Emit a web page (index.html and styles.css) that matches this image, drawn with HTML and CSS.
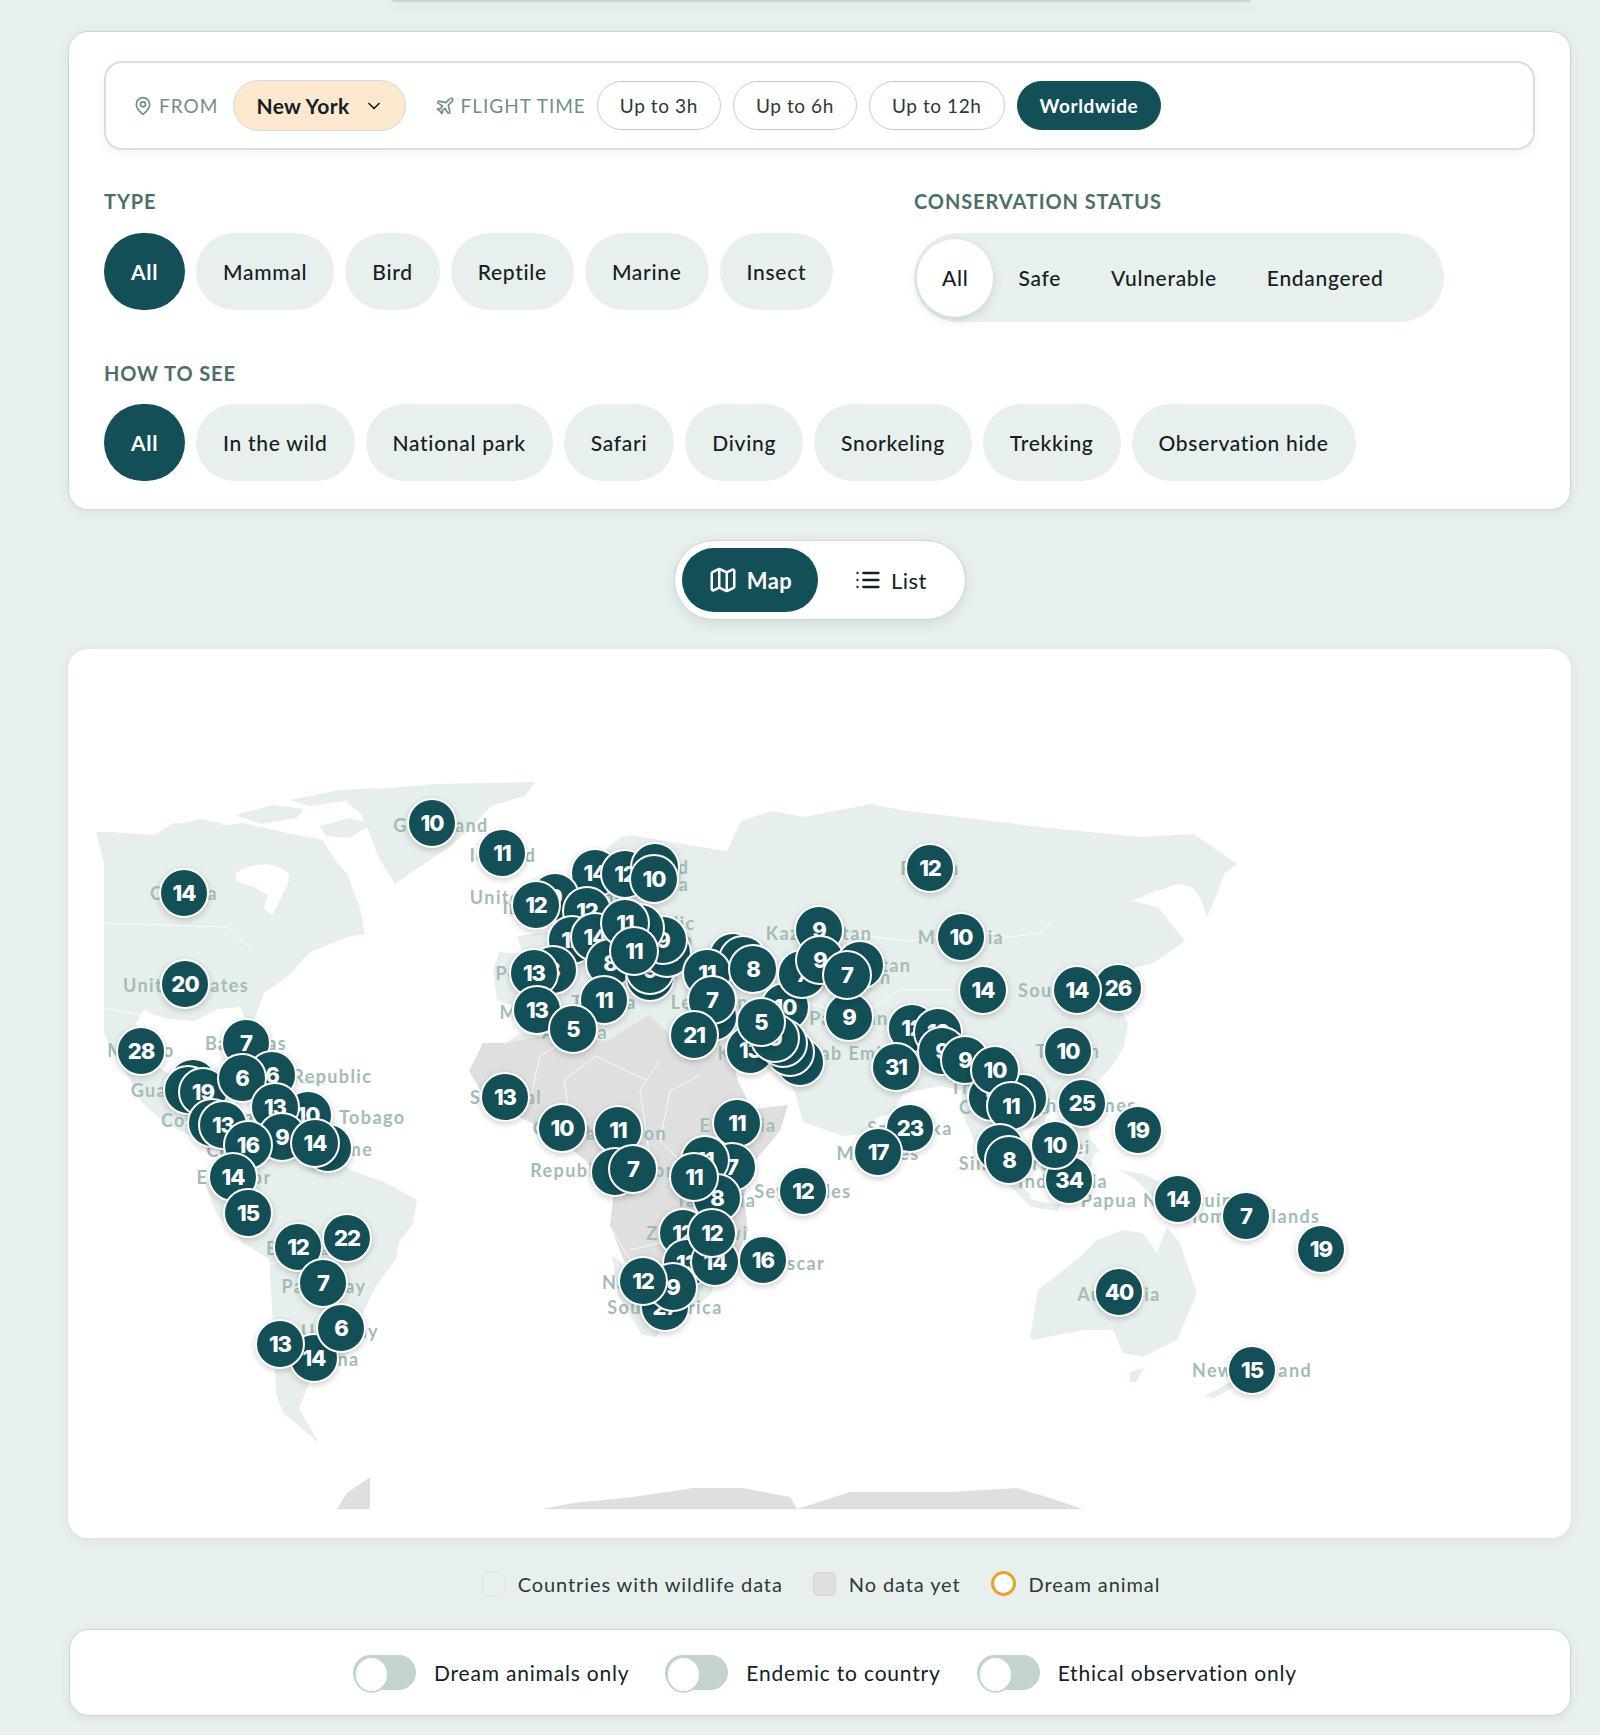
FILE: index.html
```html
<!DOCTYPE html>
<html lang="en">
  <head>
    <meta charset="UTF-8" />
    <meta name="viewport" content="width=device-width, initial-scale=1.0" />
    <title>Wildlife Map</title>
    <link rel="stylesheet" href="styles.css">
  </head>
  <body>
    <div class="top-strip"></div>

    <section class="card filters">
      <div class="trip-bar">
        <span class="trip-label">
          <svg class="icon" width="20" height="22" viewBox="0 0 24 24"><path d="M20 10c0 6-8 12-8 12s-8-6-8-12a8 8 0 0 1 16 0Z"/><circle cx="12" cy="10" r="3"/></svg>
          FROM
        </span>
        <button class="city-btn">
          New York
          <svg class="icon" width="20" height="20" viewBox="0 0 24 24"><path d="m6 9 6 6 6-6"/></svg>
        </button>
        <span class="trip-label flight-label">
          <svg class="icon" width="20" height="20" viewBox="0 0 24 24"><path d="M17.8 19.2 16 11l3.5-3.5C21 6 21.5 4 21 3c-1-.5-3 0-4.5 1.5L13 8 4.8 6.2c-.5-.1-.9.1-1.1.5l-.3.5c-.2.5-.1 1 .3 1.3L9 12l-2 3H4l-1 1 3 2 2 3 1-1v-3l3-2 3.5 5.3c.3.4.8.5 1.3.3l.5-.2c.4-.3.6-.7.5-1.2z"/></svg>
          FLIGHT TIME
        </span>
        <button class="time-btn">Up to 3h</button>
        <button class="time-btn">Up to 6h</button>
        <button class="time-btn">Up to 12h</button>
        <button class="time-btn active">Worldwide</button>
      </div>

      <div class="filter-columns">
        <div class="type-col">
          <h3 class="group-label">TYPE</h3>
          <div class="chips">
            <button class="chip active">All</button>
            <button class="chip">Mammal</button>
            <button class="chip">Bird</button>
            <button class="chip">Reptile</button>
            <button class="chip">Marine</button>
            <button class="chip">Insect</button>
          </div>
        </div>
        <div>
          <h3 class="group-label">CONSERVATION STATUS</h3>
          <div class="segments">
            <button class="segment selected">All</button>
            <button class="segment">Safe</button>
            <button class="segment">Vulnerable</button>
            <button class="segment">Endangered</button>
          </div>
        </div>
      </div>

      <h3 class="group-label see-label">HOW TO SEE</h3>
      <div class="chips">
        <button class="chip active">All</button>
        <button class="chip">In the wild</button>
        <button class="chip">National park</button>
        <button class="chip">Safari</button>
        <button class="chip">Diving</button>
        <button class="chip">Snorkeling</button>
        <button class="chip">Trekking</button>
        <button class="chip">Observation hide</button>
      </div>
    </section>

    <div class="view-row">
      <div class="view-toggle">
        <button class="view-btn active">
          <svg class="icon" width="30" height="30" viewBox="0 0 24 24"><path d="M14.106 5.553a2 2 0 0 0 1.788 0l3.659-1.83A1 1 0 0 1 21 4.619v12.764a1 1 0 0 1-.553.894l-4.553 2.277a2 2 0 0 1-1.788 0l-4.212-2.106a2 2 0 0 0-1.788 0l-3.659 1.83A1 1 0 0 1 3 19.381V6.618a1 1 0 0 1 .553-.894l4.553-2.277a2 2 0 0 1 1.788 0z"/><path d="M15 5.764v15"/><path d="M9 3.236v15"/></svg>
          Map
        </button>
        <button class="view-btn">
          <svg class="icon" width="28" height="28" viewBox="0 0 24 24"><path d="M8 6h13M8 12h13M8 18h13M3 6h.01M3 12h.01M3 18h.01"/></svg>
          List
        </button>
      </div>
    </div>

    <section class="map-card" id="map">
      <svg class="world" viewBox="68 649 1503 889">
        <g class="land">
          <!-- arctic islands + greenland -->
          <path d="M172 825l30-6 22 5-14 7-30 2zM235 815l38-10 30 4-6 9-36 6zM290 800l50-10 40-2-30 12-40 6zM320 826l30-8 22 6-22 14-24-2zM345 792l90-8 100-2-10 14-34 10-16 18-24 22-30 20-26 18-16-26-10-26-8-18-14-12z"/>
          <!-- north america -->
          <path d="M96 832h14l45 3 18-12 37 4 33-4 44 10 36 7 12 20 12 14 13 34 5 26-14 2-41 16-22 24-24 17-8 22-6 14-10-22-22 2-24 12-24-2-16-4-10-6-8 14 2 20 6 14 10 8 14 8 22 2 10-10 6 2-4 16-14 10-8 6 20 24 18 10 16 8 6 14-16-2-28-14-30-16-24-20-12-24-16-24-10-22v-170z"/>
          <path d="M236 873c12-8 36-14 52 0 4 10-6 20-10 32l-6 10-8-6 4-14-14-8-18-6z" class="water"/>
          <path d="M247 1050l26 4 22 10-18 4-30-8zM300 1078l20 2 8 5-24-1z"/>
          <!-- south america -->
          <path d="M247 1137l24-14 30 6 49 41 34 12 33 18-4 24-14 18-3 17-20 27-13 27-14 40-40 30-10 26 20 34-36-30-7-20-3-67-4-67-26-16-27-30-10-27 10-27z"/>
          <!-- iceland uk -->
          <path d="M480 848l22-8 18 6-12 12-22 2zM530 880l14 8 4 20 8 12-18 8-12-4 6-16-6-14zM508 900l14-4 2 14-14 6z"/>
          <!-- eurasia -->
          <path d="M497 1000l-4-30 6-18 24 2-6-18 30-4 30-8 18-14-8-24 18-36 16-13 10-2 70 12 26 4 14-30 30-10 33 6 67-13 36 7 53 6 80 10 100 10 54-3 43 30-13 10-6 18-11 25-6-18-9-12-14-3-24 8-22 9 26 6 27 34-33 23-34 7-6 12 10 28 6 12-4 24-14 22-17 17-13 17 2 20 10 25-14-2-6-16-4-24-9-5-18-3 6 18-4 8-30 8-22 24-14-10-12-26-4-30-22-4-36 8-10 18-16 6-14 16-20 2-40-14-8-30-10-14 2-28-28-8-34 10-28-10-22 2-6-12-30-2-26 20-10-14z"/>
          <path d="M985 1150l20 14 26 32-6 4-24-22zM1040 1140l16 8 10 20-20 10-12-18zM1076 1112l10 2 4 24 10 14-10 2-14-20zM1017 1193l20 8 24 4-4 6-26-4zM1100 986l14-16 10-14 8-2-2 20-14 14-18 4zM1084 1150l10 4-6 30-8-2zM1120 1170l24 4 28 14 26 14-12 4-32-8-18-18z"/>
          <!-- africa data countries -->
          <path d="M497 1072l10-30 12-8 90 6 40-26 20 20-190 40zM612 1255l30 26 50 12-36 44-14-2-24-40zM690 1290l26-18-4 20-12 12z"/>
          <!-- australia + nz -->
          <path d="M1030 1337l8-47 42-33 17-17 26-10 20 3 14 20 10-26 13 16 17 50-20 47-34 17-20-4-10-23-30 0-50 10zM1130 1372l14-4-8 14-6 0zM1204 1396l26-14 6 4-22 12zM1244 1345l10 2-2 12-8 0z"/>
        </g>
        <g class="grey">
          <!-- africa -->
          <path d="M507 1043l40-8 60 6 42-26 26 24 56 12 7 30 14 28 36-4-8 26-30 36-6 30 4 34-12 26-36 8-12-10-20 22-40-6-18-46 4-34-30-32-36-28-33-16-32-20-14-24 14-28z"/>
          <!-- antarctica -->
          <path d="M543 1509l30-6 60-6 60-9 50 0 47 9 7 12zM797 1509l53-17 100 0 67-4 30 9 36 12z M337 1509l10-16 23-16v32z"/>
        </g>
        <g class="borders">
          <path d="M96 923l131 4 23 20M96 1007l60 10 20 4M250 1270l40-12 32 20M300 1350l20-30"/>
          <path d="M530 1100l10-44 30-18M570 1120l-6-40 32-24 50 24M650 1160l-10-70 20-30M700 1075l-30 16-10 50 30 30 10-30M560 1210l40 0 30 50M670 1240l-40 10"/>
          <path d="M760 965l60-20 40-10 50 6 40-6 20-6 40 8 30-4 14-14M830 1040l40-30 30-20 60 0 30-30M770 990l30 10 30 10"/>
        </g>
      </svg>
      <div id="labels"></div>
      <div id="markers"></div>
    </section>

    <div class="legend">
      <span class="legend-item"><i class="swatch swatch-data"></i>Countries with wildlife data</span>
      <span class="legend-item"><i class="swatch swatch-none"></i>No data yet</span>
      <span class="legend-item"><i class="swatch swatch-dream"></i>Dream animal</span>
    </div>

    <section class="card switches">
      <label class="switch-item"><span class="switch"></span>Dream animals only</label>
      <label class="switch-item"><span class="switch"></span>Endemic to country</label>
      <label class="switch-item"><span class="switch"></span>Ethical observation only</label>
    </section>

    <script src="map.js"></script>
  </body>
</html>
```
FILE: styles.css
```css
* {
  box-sizing: border-box;
}
html,
body {
  height: 1735px;
  overflow: hidden;
}
body {
  margin: 0;
  padding: 0 29px 0 68px;
  background-color: #e8f0ed;
  font-family: Lato, "Noto Sans", sans-serif;
  color: #14211f;
}
button {
  font-family: inherit;
  border: none;
  cursor: pointer;
}
.icon {
  fill: none;
  stroke: currentColor;
  stroke-width: 2;
  stroke-linecap: round;
  stroke-linejoin: round;
  flex: none;
}
.top-strip {
  height: 2px;
  margin: 0 321px 29px 324px;
  background: #c6d6d2;
  box-shadow: 0 2px 14px rgba(60, 100, 90, 0.22);
}
.card {
  background: white;
  border: 1px solid #c9dad6;
  border-radius: 20px;
  box-shadow: 0 2px 10px rgba(60, 100, 90, 0.1);
}
.filters {
  height: 479px;
  padding: 29px 35px;
}
.trip-bar {
  display: flex;
  align-items: center;
  height: 89px;
  padding: 0 0 0 27px;
  border: 2px solid #d2e1dd;
  border-radius: 18px;
  box-shadow: 0 3px 10px rgba(60, 100, 90, 0.08);
}
.trip-label {
  display: flex;
  align-items: center;
  gap: 6px;
  font-size: 19px;
  letter-spacing: 1px;
  color: #6f8f8a;
}
.flight-label {
  margin: 0 11px 0 29px;
}
.city-btn {
  display: flex;
  align-items: center;
  gap: 14px;
  height: 51px;
  margin-left: 15px;
  padding: 0 21px 0 22px;
  font-size: 21px;
  font-weight: 700;
  letter-spacing: 0.4px;
  color: #14211f;
  background: #fbe8cf;
  border: 1px solid #d5dccf;
  border-radius: 26px;
}
.time-btn {
  height: 49px;
  margin-right: 12px;
  padding: 0 22px;
  font-size: 19px;
  letter-spacing: 0.6px;
  color: #2a3a38;
  background: white;
  border: 1px solid #bcd0cb;
  border-radius: 25px;
}
.time-btn.active {
  color: white;
  font-weight: 700;
  background: #134f56;
  border-color: #134f56;
}
.filter-columns {
  display: flex;
}
.type-col {
  width: 810px;
}
.group-label {
  margin: 40px 0 21px;
  font-size: 20px;
  line-height: 22px;
  font-weight: 700;
  letter-spacing: 0.9px;
  color: #4c7069;
}
.see-label {
  margin-bottom: 20px;
}
.chips {
  display: flex;
  gap: 11px;
}
.chip {
  height: 77px;
  padding: 0 27px;
  font-size: 21px;
  font-weight: 500;
  letter-spacing: 0.7px;
  color: #14211f;
  background: #e8f0ed;
  border-radius: 39px;
}
.chip.active {
  color: white;
  font-weight: 700;
  background: #134f56;
}
.segments {
  display: flex;
  align-items: center;
  width: 530px;
  height: 89px;
  padding: 0 3px;
  background: #e8f0ed;
  border-radius: 45px;
}
.segment {
  height: 78px;
  padding: 0 25px;
  font-size: 21px;
  font-weight: 500;
  letter-spacing: 0.7px;
  color: #14211f;
  background: transparent;
  border-radius: 39px;
}
.segment.selected {
  background: white;
  box-shadow: 0 3px 10px rgba(60, 100, 90, 0.2);
}
.view-row {
  display: flex;
  justify-content: center;
  padding: 30px 0 29px;
}
.view-toggle {
  display: flex;
  align-items: center;
  gap: 5px;
  width: 292px;
  height: 80px;
  padding: 0 7px;
  background: white;
  border: 1px solid #c9dad6;
  border-radius: 40px;
  box-shadow: 0 4px 12px rgba(60, 100, 90, 0.14);
}
.view-btn {
  display: flex;
  align-items: center;
  justify-content: center;
  gap: 9px;
  width: 140px;
  height: 64px;
  font-size: 22px;
  letter-spacing: 0.5px;
  color: #14211f;
  background: transparent;
  border-radius: 32px;
}
.view-btn.active {
  width: 143px;
  color: white;
  font-weight: 700;
  background: #134f56;
}
.map-card {
  position: relative;
  height: 889px;
  overflow: hidden;
  background: white;
  border-radius: 20px;
  box-shadow: 0 2px 10px rgba(60, 100, 90, 0.1);
}
.world {
  position: absolute;
  left: 0;
  top: 0;
  width: 100%;
  height: 100%;
}
.land path {
  fill: #e7efec;
}
.land .water {
  fill: white;
}
.grey path {
  fill: #dedfde;
}
.borders path {
  fill: none;
  stroke: white;
  stroke-width: 1;
  opacity: 0.8;
}
.place {
  position: absolute;
  transform: translate(-50%, -50%);
  font-size: 18px;
  font-weight: 700;
  letter-spacing: 1.4px;
  white-space: nowrap;
  color: #a3bcb7;
}
.pin {
  position: absolute;
  display: flex;
  align-items: center;
  justify-content: center;
  width: 50px;
  height: 50px;
  transform: translate(-50%, -50%);
  font-family: Inter, sans-serif;
  font-size: 22px;
  font-weight: 800;
  letter-spacing: -1px;
  color: white;
  background: #134f56;
  border: 2.5px solid white;
  border-radius: 50%;
  box-shadow: 0 2px 6px rgba(0, 0, 0, 0.2);
}
.legend {
  display: flex;
  justify-content: center;
  gap: 30px;
  padding: 33px 0;
  margin-left: 3px;
  font-size: 20px;
  letter-spacing: 0.9px;
  line-height: 24px;
  color: #2a3a38;
}
.legend-item {
  display: flex;
  align-items: center;
  gap: 13px;
}
.swatch {
  width: 23px;
  height: 24px;
  border-radius: 5px;
}
.swatch-data {
  background: #e8f0ed;
  border: 1px solid #dce6e3;
}
.swatch-none {
  background: #dedfde;
  border: 1px solid #d2d5d4;
}
.swatch-dream {
  width: 25px;
  height: 25px;
  border: 3px solid #e9a02c;
  border-radius: 50%;
  background: white;
}
.switches {
  display: flex;
  justify-content: center;
  align-items: center;
  gap: 36px;
  height: 87px;
  margin-left: 1px;
  padding-left: 10px;
}
.switch-item {
  display: flex;
  align-items: center;
  gap: 18px;
  font-size: 21px;
  letter-spacing: 0.8px;
  color: #14211f;
}
.switch {
  position: relative;
  display: block;
  width: 63px;
  height: 35px;
  background: #c3d4d0;
  border-radius: 18px;
}
.switch::after {
  content: "";
  position: absolute;
  left: 1px;
  top: 1px;
  width: 31px;
  height: 33px;
  background: white;
  border: 2px solid #c3d4d0;
  border-radius: 50%;
}
```
FILE: map.js
```js
// Map card sits at this page position, data below is in page pixels
const originX = 68;
const originY = 649;

const places = [
  ["Greenland", 441, 825], ["Iceland", 503, 855], ["Canada", 184, 893],
  ["United States", 186, 985], ["Mexico", 141, 1050], ["Bahamas", 246, 1043],
  ["Dominican Republic", 280, 1076], ["Guatemala", 180, 1090],
  ["Trinidad and Tobago", 312, 1117], ["Costa Rica", 210, 1120],
  ["Suriname", 330, 1149], ["Colombia", 250, 1150], ["Ecuador", 234, 1177],
  ["Bolivia", 298, 1248], ["Paraguay", 324, 1286], ["Uruguay", 340, 1331],
  ["Argentina", 314, 1359], ["United Kingdom", 545, 897], ["Ireland", 535, 907],
  ["Portugal", 535, 973], ["Morocco", 540, 1012], ["Tunisia", 604, 1002],
  ["Algeria", 575, 1032], ["Finland", 655, 867], ["Estonia", 655, 884],
  ["Czech Republic", 625, 923], ["Slovakia", 655, 940], ["Lebanon", 710, 1002],
  ["Kazakhstan", 819, 933], ["Kyrgyzstan", 860, 965], ["Tajikistan", 847, 977],
  ["Pakistan", 849, 1018], ["United Arab Emirates", 830, 1053], ["Kuwait", 750, 1053],
  ["Senegal", 506, 1097], ["Ghana", 562, 1128], ["Cameroon", 620, 1133],
  ["Republic of Congo", 615, 1170], ["Ethiopia", 738, 1125], ["Kenya", 700, 1170],
  ["Tanzania", 716, 1200], ["Seychelles", 803, 1191], ["Zambia", 680, 1233],
  ["Malawi", 715, 1233], ["Madagascar", 770, 1263], ["Namibia", 640, 1282],
  ["South Africa", 665, 1307], ["Russia", 930, 868], ["Mongolia", 961, 937],
  ["South Korea", 1075, 990], ["Taiwan", 1068, 1051], ["Philippines", 1085, 1105],
  ["Thailand", 990, 1087], ["Cambodia", 1005, 1107], ["Malaysia", 1020, 1147],
  ["Brunei", 1060, 1147], ["Singapore", 1005, 1163], ["Sri Lanka", 910, 1128],
  ["Maldives", 878, 1153], ["Indonesia", 1063, 1181], ["Papua New Guinea", 1168, 1200],
  ["Solomon Islands", 1245, 1216], ["Australia", 1119, 1294], ["New Zealand", 1252, 1370],
];

// Later pins are painted over earlier ones
const pins = [
  [432, 823, 10], [502, 853, 11], [184, 893, 14], [185, 984, 20], [141, 1051, 28],
  [246, 1043, 7], [272, 1075, 6], [193, 1083, 1], [188, 1090, 1], [203, 1092, 19],
  [242, 1078, 6], [308, 1115, 10], [212, 1123, 9], [223, 1125, 13], [275, 1107, 13],
  [282, 1137, 9], [248, 1145, 16], [328, 1148, 8], [315, 1143, 14], [233, 1177, 14],
  [248, 1213, 15], [298, 1247, 12], [347, 1238, 22], [323, 1283, 7], [314, 1358, 14],
  [341, 1328, 6], [280, 1344, 13],

  [595, 873, 14], [625, 874, 12], [655, 867, 9], [654, 879, 10], [555, 897, 9],
  [536, 905, 12], [587, 911, 12], [572, 940, 12], [595, 937, 14], [610, 963, 8],
  [553, 970, 8], [650, 977, 6], [650, 970, 9], [667, 953, 12], [663, 940, 9],
  [640, 928, 9], [625, 923, 11], [634, 951, 11], [534, 973, 13], [537, 1010, 13],
  [604, 1000, 11], [573, 1029, 5],

  [733, 957, 9], [743, 960, 9], [707, 973, 11], [753, 969, 8], [713, 1017, 9],
  [712, 1000, 7], [694, 1035, 21], [750, 1050, 13], [785, 1007, 10], [802, 974, 7],
  [819, 930, 9], [820, 960, 9], [860, 965, 9], [849, 1017, 9], [847, 975, 7],
  [800, 1062, 9], [790, 1052, 9], [783, 1043, 9], [775, 1038, 9], [761, 1022, 5],

  [505, 1097, 13], [562, 1128, 10], [618, 1130, 11], [737, 1123, 11], [615, 1172, 9],
  [633, 1169, 7], [732, 1167, 7], [705, 1160, 11], [717, 1198, 8], [694, 1177, 11],
  [803, 1191, 12], [683, 1233, 12], [687, 1263, 13], [715, 1262, 14], [712, 1233, 12],
  [763, 1260, 16], [665, 1307, 27], [673, 1287, 9], [643, 1281, 12],

  [930, 868, 12], [961, 937, 10], [983, 990, 14], [1118, 988, 26], [1077, 990, 14],
  [1068, 1051, 10], [912, 1028, 12], [938, 1032, 13], [896, 1067, 31], [942, 1051, 9],
  [965, 1060, 9], [992, 1097, 9], [1023, 1098, 9], [995, 1070, 10], [1011, 1106, 11],
  [1082, 1103, 25], [1138, 1130, 19], [910, 1128, 23], [878, 1152, 17], [1000, 1148, 9],
  [1069, 1180, 34], [1009, 1160, 8], [1055, 1145, 10], [1178, 1199, 14], [1246, 1216, 7],
  [1321, 1249, 19], [1119, 1292, 40], [1252, 1370, 15],
];

function addItems(parentId, items, className) {
  const parent = document.getElementById(parentId);
  items.forEach((item) => {
    const el = document.createElement("div");
    el.className = className;
    el.style.left = `${item.x - originX}px`;
    el.style.top = `${item.y - originY}px`;
    el.textContent = item.text;
    parent.appendChild(el);
  });
}

addItems("labels", places.map(([text, x, y]) => ({ text, x, y })), "place");
addItems("markers", pins.map(([x, y, text]) => ({ text, x, y })), "pin");
```
